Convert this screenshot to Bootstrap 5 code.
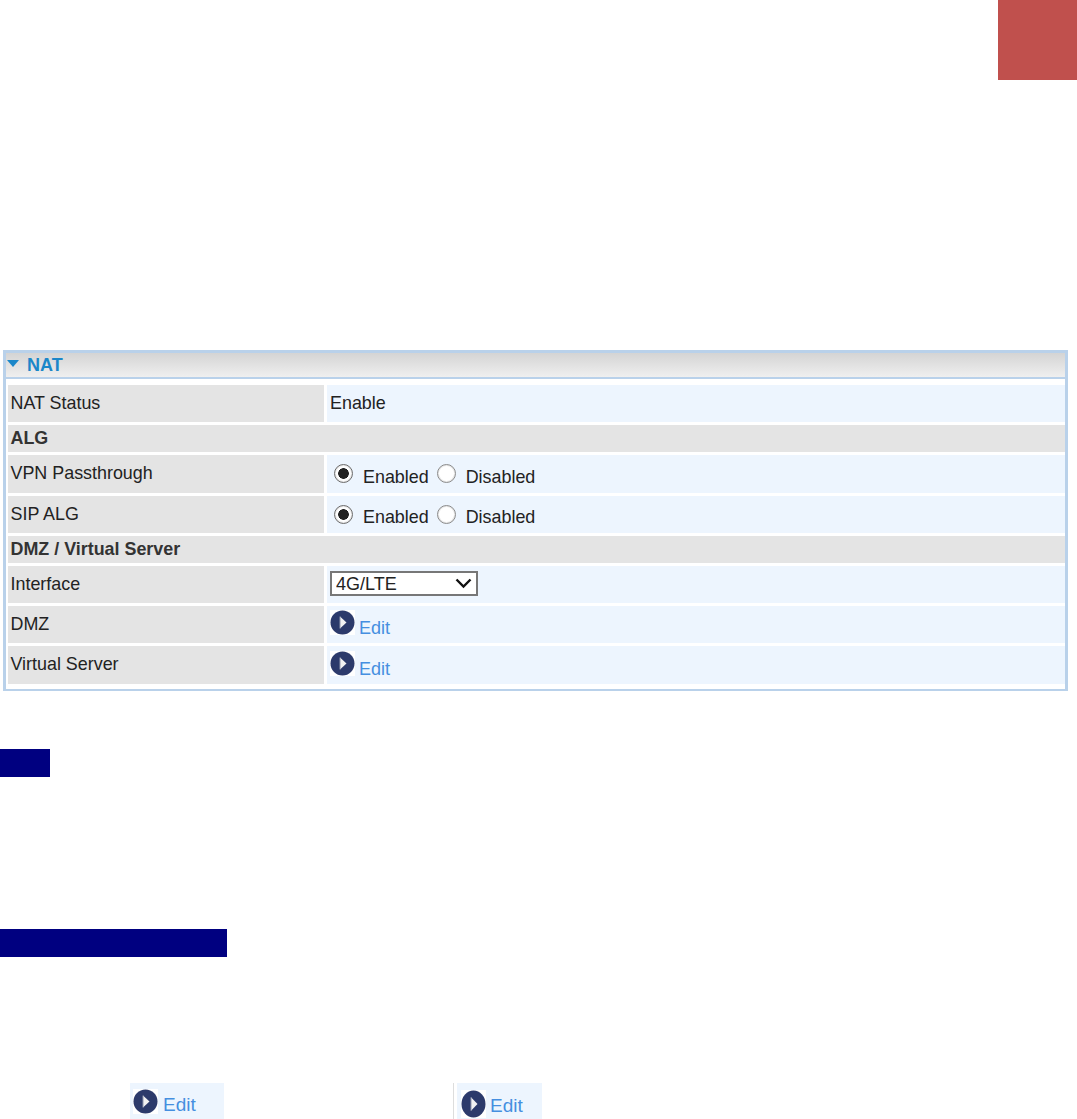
<!DOCTYPE html>
<html lang="en">
<head>
<meta charset="utf-8">
<title>NAT</title>
<link href="https://cdn.jsdelivr.net/npm/bootstrap@5.3.0/dist/css/bootstrap.min.css" rel="stylesheet">
<style>
html,body{margin:0;background:#fff}
body{height:1119px;overflow:hidden;font-family:"Liberation Sans",Arial,sans-serif;font-size:17.9px;color:#222}
.corner-block{width:79px;height:80px;background:#c0504d}
.top-zone{height:350px}
.nat-panel{margin:0 9px 0 3px;height:341px;border:3px solid #b9d1ea;border-bottom-width:2px;background:#fff}
.nat-head{height:26px;background:linear-gradient(#d4d4d4,#efefef);border-bottom:2px solid #b9d1ea;color:#1b87c9;font-weight:700;font-size:18px;line-height:21px;padding-left:1px;gap:8px}
.tri{position:relative;top:-2px}
.nat-table{border-collapse:separate;border-spacing:3px;table-layout:fixed;width:1063px;margin:3px 0 0 -1px}
.nat-table td{padding:0 0 0 2.5px;vertical-align:middle;line-height:1.1}
.lab{width:316px;background:#e4e4e4}
.val{background:#edf5fe;padding-left:3px!important}
.sect{background:#e4e4e4;font-weight:700;color:#333}
.r27{height:27px}.r37{height:37px}.r38{height:38px}
.opt{padding-top:1px}
.rd.form-check-input{width:19px;height:19px;margin:0 10px 0 4px;background-color:#fff;border:1px solid #8a8a8a;position:relative;top:-1px;flex:none;box-shadow:inset 0 0 0 1px #e8e8e8}
.rd.form-check-input:checked{background-color:#fff;background-image:radial-gradient(circle,#222 0 5px,transparent 5.6px);border-color:#6a6a6a}
.opt-label{margin-right:4px;position:relative;top:3px}
.if-select.form-select{width:148px;height:25px;margin-top:-2px;padding:0 0 0 4px;border:2px solid #777;border-radius:0;font-size:18px;color:#222;line-height:20px;background-position:right 4px center;background-size:17px 11px;background-image:url("data:image/svg+xml,%3Csvg xmlns='http://www.w3.org/2000/svg' viewBox='0 0 17 11'%3E%3Cpath d='M1.5 1.5 8.5 8.5 15.5 1.5' fill='none' stroke='%23111' stroke-width='2.4'/%3E%3C/svg%3E")}
.go-ico{display:block;flex:none;background:#fff}
.edit-link{color:#458fe0;text-decoration:none;line-height:1;font-size:18px;margin-left:4px;position:relative;top:9px}
.val-edit{margin-top:-4px}
.navy-bar{height:28px;background:#000080}
.b1{width:50px;margin-top:58px}
.b2{width:227px;margin-top:152px}
.bottom-row{margin-top:126px;height:36px;position:relative}
.chip{background:#edf5fe;height:36px}
.c1{margin-left:130px;width:94px;padding:6px 0 0 3px}
.sep{width:1px;height:36px;background:#ddd;margin-left:229px}
.c2{margin-left:3px;width:85px;padding:7px 0 0 4px}
.chip .edit-link{font-size:19px;margin-left:5px;top:6px}
.c2 .edit-link{margin-left:4px}
</style>
</head>
<body>
<svg width="0" height="0" class="position-absolute"><defs>
<symbol id="go" viewBox="0 0 25 25"><rect width="25" height="25" fill="#fff"/><circle cx="12.5" cy="12.5" r="12" fill="#2c3a6b"/><path d="M10 6.5 16.5 12.5 10 18.5Z" fill="#f2f2f2"/><path d="M10 6.5V18.5" stroke="#8f96ad" stroke-width="1"/></symbol>
</defs></svg>

<div class="top-zone d-flex justify-content-end align-items-start"><div class="corner-block"></div></div>

<div class="nat-panel">
  <div class="nat-head d-flex align-items-center">
    <svg class="tri" width="12" height="7" viewBox="0 0 12 7"><path d="M0 0H12L6 7Z" fill="#1b87c9"/></svg>
    <span>NAT</span>
  </div>
  <table class="nat-table">
    <tr class="r37"><td class="lab">NAT Status</td><td class="val">Enable</td></tr>
    <tr class="r27"><td class="sect" colspan="2">ALG</td></tr>
    <tr class="r38"><td class="lab">VPN Passthrough</td><td class="val"><div class="opt d-flex align-items-center"><input class="rd form-check-input" type="radio" name="vpn" checked><span class="opt-label">Enabled</span><input class="rd form-check-input" type="radio" name="vpn"><span class="opt-label">Disabled</span></div></td></tr>
    <tr class="r37"><td class="lab">SIP ALG</td><td class="val"><div class="opt d-flex align-items-center"><input class="rd form-check-input" type="radio" name="sip" checked><span class="opt-label">Enabled</span><input class="rd form-check-input" type="radio" name="sip"><span class="opt-label">Disabled</span></div></td></tr>
    <tr class="r27"><td class="sect" colspan="2">DMZ / Virtual Server</td></tr>
    <tr class="r37"><td class="lab">Interface</td><td class="val"><select class="if-select form-select"><option>4G/LTE</option></select></td></tr>
    <tr class="r37"><td class="lab">DMZ</td><td class="val"><div class="val-edit d-flex align-items-start"><svg class="go-ico" width="25" height="25"><use href="#go"/></svg><a class="edit-link" href="#">Edit</a></div></td></tr>
    <tr class="r38"><td class="lab">Virtual Server</td><td class="val"><div class="val-edit d-flex align-items-start"><svg class="go-ico" width="25" height="25"><use href="#go"/></svg><a class="edit-link" href="#">Edit</a></div></td></tr>
  </table>
</div>

<div class="navy-bar b1"></div>
<div class="navy-bar b2"></div>

<div class="bottom-row d-flex">
  <div class="chip c1 d-flex align-items-start"><svg class="go-ico" width="25" height="25"><use href="#go"/></svg><a class="edit-link" href="#">Edit</a></div>
  <div class="sep"></div>
  <div class="chip c2 d-flex align-items-start"><svg class="go-ico" width="25" height="28" preserveAspectRatio="none" viewBox="0 0 25 25"><use href="#go"/></svg><a class="edit-link" href="#">Edit</a></div>
</div>
</body>
</html>
